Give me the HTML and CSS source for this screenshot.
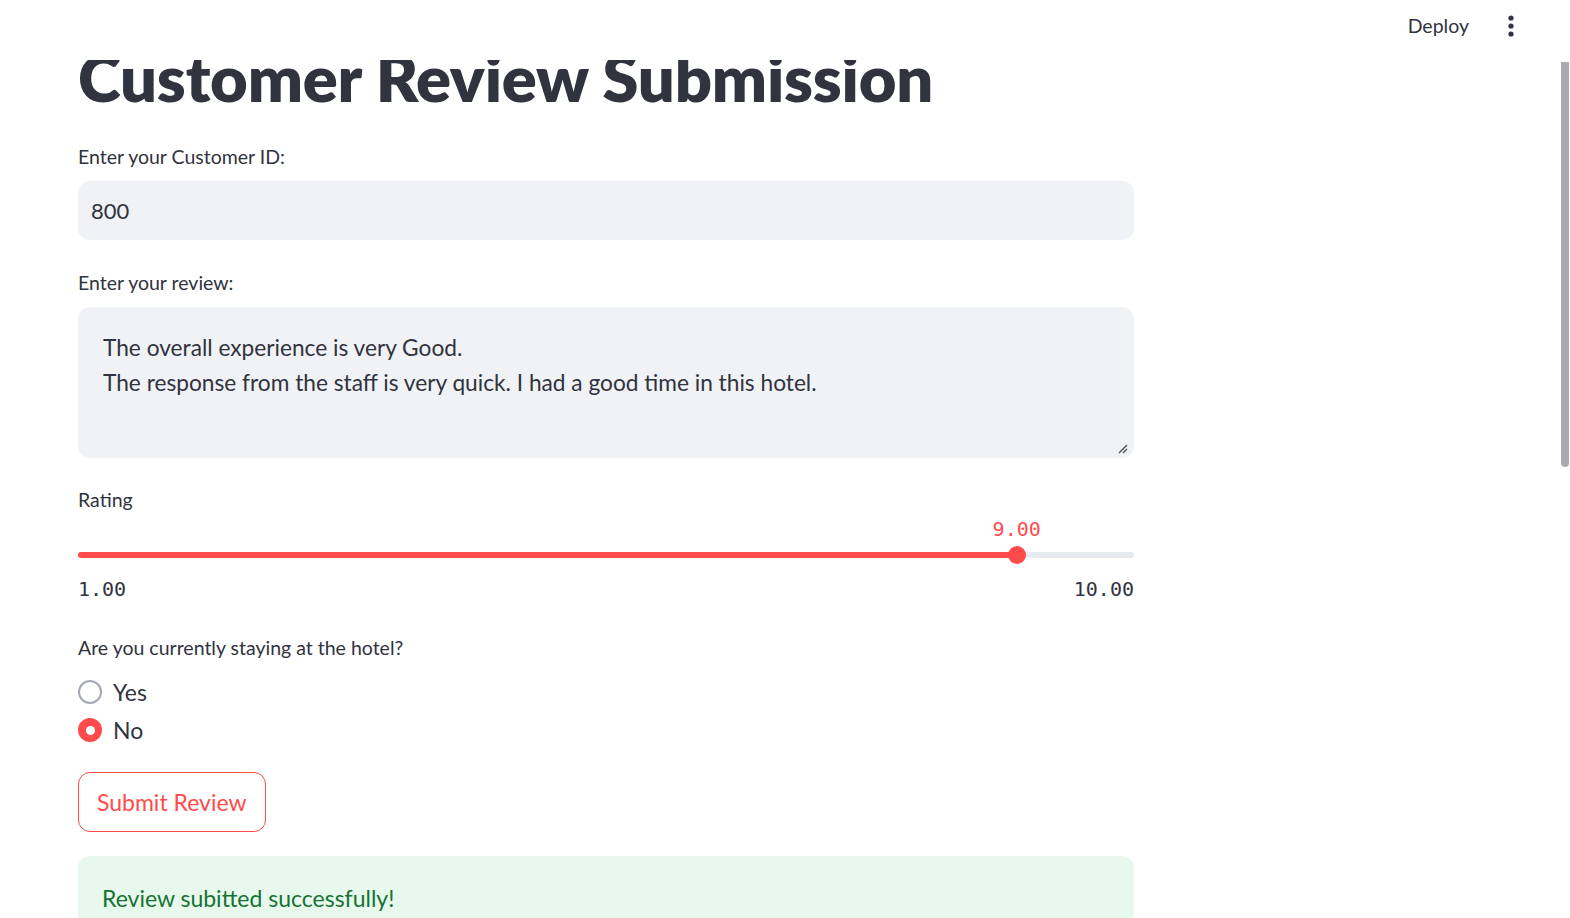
FILE: index.html
```html
<!DOCTYPE html>
<html>
<head>
<meta charset="utf-8">
<title>Customer Review Submission</title>
<link rel="stylesheet" href="styles.css">
</head>
<body>
<div class="app">
  <main class="block">
    <h1 class="title">Customer Review Submission</h1>

    <div class="widget">
      <div class="label">Enter your Customer ID:</div>
      <div class="input">800</div>
    </div>

    <div class="widget">
      <div class="label">Enter your review:</div>
      <div class="textarea">
        <div class="ta-line">The overall experience is very Good.</div>
        <div class="ta-line">The response from the staff is very quick. I had a good time in this hotel.</div>
        <svg class="resize" width="10" height="10" viewBox="0 0 10 10"><path d="M1 9 L9 1 M5 9 L9 5" stroke="#4a4a4a" stroke-width="1.3" fill="none"/></svg>
      </div>
    </div>

    <div class="widget slider-widget">
      <div class="label">Rating</div>
      <div class="slider">
        <div class="slider-value-row"><span class="slider-value" style="left: 88.89%">9.00</span></div>
        <div class="slider-track-row">
          <div class="track">
            <div class="track-fill" style="width: 88.89%"></div>
            <div class="thumb" style="left: 88.89%"></div>
          </div>
        </div>
        <div class="ticks"><span>1.00</span><span>10.00</span></div>
      </div>
    </div>

    <div class="widget radio-widget">
      <div class="label">Are you currently staying at the hotel?</div>
      <div class="radio-group">
        <div class="radio-row"><span class="radio"></span><span class="radio-text">Yes</span></div>
        <div class="radio-row"><span class="radio checked"></span><span class="radio-text">No</span></div>
      </div>
    </div>

    <div class="button-row"><button class="btn">Submit Review</button></div>

    <div class="alert">Review subitted successfully!</div>
  </main>

  <header class="topbar">
    <span class="deploy">Deploy</span>
    <svg class="menu" width="8" height="22" viewBox="0 0 8 22"><circle cx="4" cy="3" r="2.6" fill="#31333f"/><circle cx="4" cy="11" r="2.6" fill="#31333f"/><circle cx="4" cy="19" r="2.6" fill="#31333f"/></svg>
  </header>
  <div class="scroll-thumb"></div>
</div>
</body>
</html>
```

FILE: styles.css
```css
* { box-sizing: border-box; }
html, body { margin: 0; padding: 0; background: #fff; }
body {
  width: 1570px;
  height: 918px;
  overflow: hidden;
  font-family: "Lato", "Noto Sans", sans-serif;
  color: #31333f;
}
.app { position: relative; width: 1570px; height: 918px; overflow: hidden; }

.topbar {
  position: absolute;
  top: 0; left: 0; right: 0;
  height: 60px;
  background: #fff;
  display: flex;
  align-items: center;
  justify-content: flex-end;
  padding-right: 55px;
  gap: 38px;
}
.deploy { font-size: 19.5px; color: #31333f; line-height: 1; margin-top: -8px; }
.menu { margin-top: -8px; }

.scroll-thumb {
  position: absolute;
  left: 1561px;
  top: 62px;
  width: 8px;
  height: 405px;
  background: #a9a9ae;
  border-radius: 0 0 4px 4px;
}

.block {
  width: 1134px;
  padding-left: 78px;
  padding-top: 37px;
}

.title {
  margin: 0;
  font-size: 65px;
  font-weight: 800;
  line-height: 80px;
  color: #31333f;
  letter-spacing: -0.2px;
}

.widget { margin-top: 25px; }

.label {
  font-size: 19.5px;
  line-height: 30px;
  height: 30px;
  margin-bottom: 9px;
  color: #31333f;
}

.input {
  height: 59px;
  background: #f0f2f6;
  border-radius: 12px;
  padding-left: 13px;
  font-size: 22px;
  line-height: 59px;
}

.textarea {
  position: relative;
  height: 151px;
  margin-top: 1px;
  background: #f0f2f6;
  border-radius: 12px;
  padding: 24px 25px;
  font-size: 22.7px;
  line-height: 34.5px;
}
.resize { position: absolute; right: 6px; bottom: 4px; }

.widget + .widget { margin-top: 28px; }

.widget + .slider-widget { margin-top: 27px; }
.slider-widget .label { margin-bottom: 0; }
.slider { height: 90px; }
.slider-value-row { position: relative; height: 28px; }
.slider-value {
  position: absolute;
  top: 0;
  transform: translateX(-50%);
  font-family: "DejaVu Sans Mono", "Liberation Mono", monospace;
  font-size: 20px;
  line-height: 28px;
  color: #ff4b4b;
}
.slider-track-row { height: 24px; display: flex; align-items: center; }
.track {
  position: relative;
  width: 100%;
  height: 6px;
  background: #e6eaf1;
  border-radius: 3px;
}
.track-fill {
  height: 6px;
  background: #ff4b4b;
  border-radius: 3px;
}
.thumb {
  position: absolute;
  top: 50%;
  width: 18px;
  height: 18px;
  margin-left: -9px;
  margin-top: -9px;
  background: #ff4b4b;
  border-radius: 50%;
}
.ticks {
  margin-top: 8px;
  height: 28px;
  display: flex;
  justify-content: space-between;
  font-family: "DejaVu Sans Mono", "Liberation Mono", monospace;
  font-size: 20px;
  line-height: 28px;
  color: #31333f;
}

.slider-widget + .radio-widget { margin-top: 28px; }
.radio-widget .label { margin-bottom: 10px; }
.radio-group { display: flex; flex-direction: column; }
.radio-row {
  height: 38px;
  display: flex;
  align-items: center;
  gap: 11px;
}
.radio {
  width: 24px;
  height: 24px;
  border-radius: 50%;
  border: 2px solid #a3a8b4;
  background: #fff;
  flex: none;
  position: relative;
}
.radio.checked {
  border: none;
  background: #ff4b4b;
}
.radio.checked::after {
  content: "";
  position: absolute;
  left: 50%; top: 50%;
  width: 9px; height: 9px;
  margin: -4.5px 0 0 -4.5px;
  border-radius: 50%;
  background: #fff;
}
.radio-text { font-size: 23px; line-height: 38px; }

.button-row { margin-top: 23px; }
.btn {
  height: 60px;
  padding: 0 18px;
  background: #fff;
  border: 1px solid #ff4b4b;
  border-radius: 12px;
  color: #ff4b4b;
  font-family: inherit;
  font-size: 23px;
  line-height: 38px;
  cursor: pointer;
}

.alert {
  margin-top: 24px;
  height: 100px;
  background: #e7f8ed;
  border-radius: 12px;
  padding: 23px 24px;
  color: #177233;
  font-size: 23px;
  line-height: 38px;
}
```
